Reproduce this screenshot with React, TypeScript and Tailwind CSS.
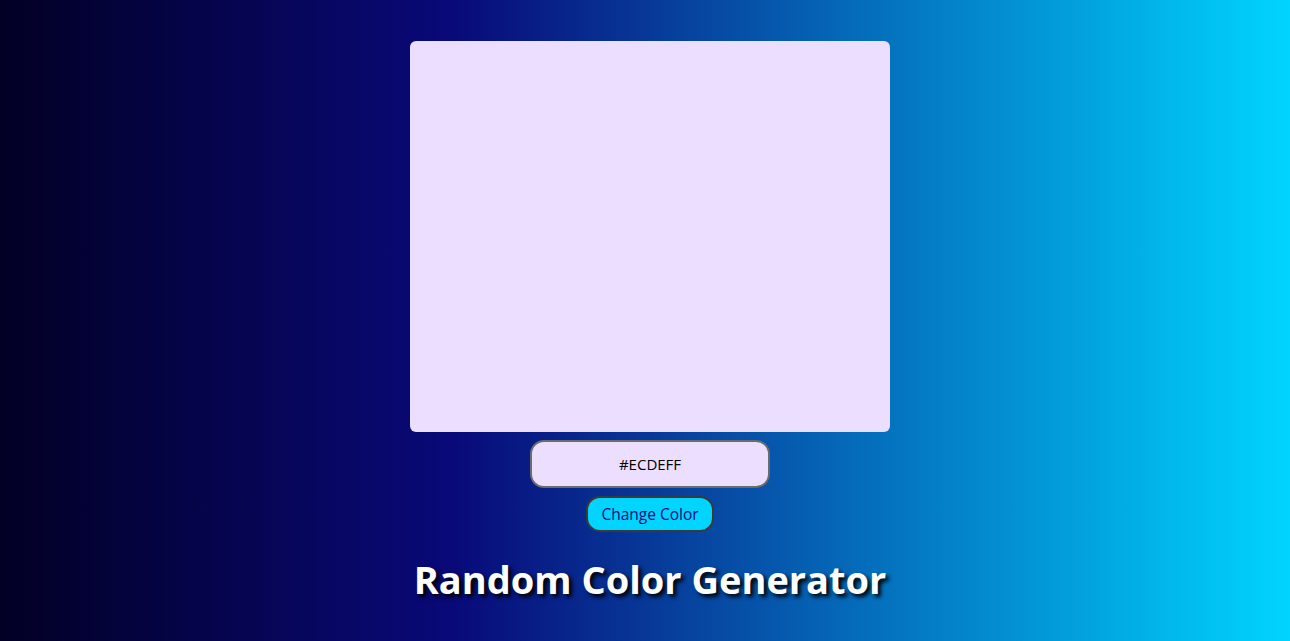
export default function App() {
  return (
    <div
      className="w-full h-[641px] overflow-hidden flex flex-col items-center pt-[41px] pl-[10px] bg-[linear-gradient(90deg,#020024_0%,#090979_35%,#00d4ff_100%)]"
      style={{ fontFamily: '"Open Sans", "Noto Sans", sans-serif' }}
    >
      <div className="w-[480px] h-[391px] rounded-[6px] bg-[#ECDEFF]" />
      <input
        readOnly
        value="#ECDEFF"
        className="mt-[8px] w-[240px] h-[48px] rounded-[14px] border-2 border-[#6b6b6b] bg-[#ECDEFF] text-center text-[15px] text-black outline-none"
      />
      <button className="mt-[8px] w-[128px] h-[36px] pt-[2px] rounded-[14px] border-2 border-[#3a3a3a] bg-[#00d4ff] text-[15.5px] text-[#090979]">
        Change Color
      </button>
      <h1 className="mt-[23px] text-[38px] font-bold text-white leading-[48px] [text-shadow:3px_3px_4px_#000]">
        Random Color Generator
      </h1>
    </div>
  );
}
